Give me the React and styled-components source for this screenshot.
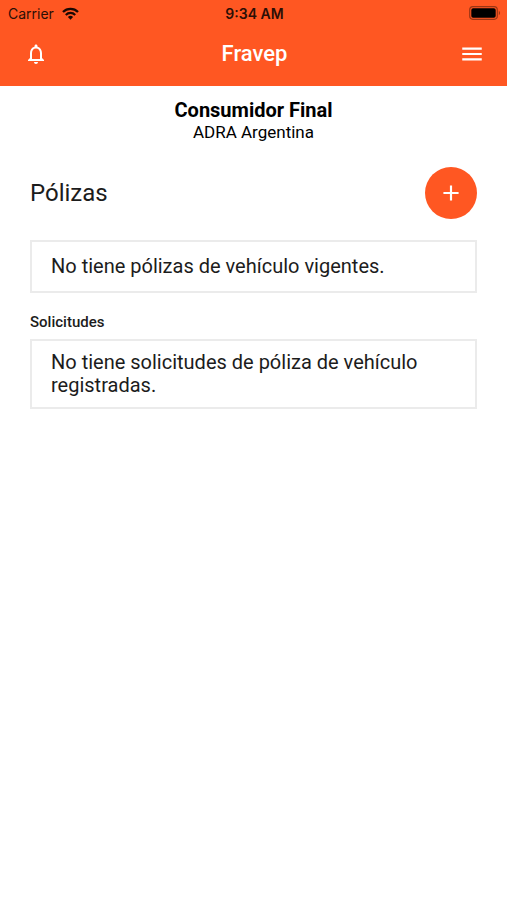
import React from "react";
import styled, { createGlobalStyle } from "styled-components";
import { MdAdd, MdMenu, MdNotificationsNone } from "react-icons/md";

const GlobalStyle = createGlobalStyle`
  * {
    box-sizing: border-box;
  }

  body {
    margin: 0;
    background: #fff;
    color: #1c1c1c;
    font-family: Roboto, sans-serif;
  }
`;

const TopBar = styled.header`
  background-color: #ff5722;
`;

const StatusBar = styled.div`
  display: grid;
  grid-template-columns: 1fr auto 1fr;
  align-items: center;
  height: 26px;
  padding: 0 6px 0 8px;
  color: #2b0f06;
  font-family: Inter, sans-serif;
  font-size: 14px;
`;

const Carrier = styled.div`
  display: flex;
  align-items: center;
  gap: 8px;
`;

const Clock = styled.time`
  font-weight: 600;
`;

const Battery = styled.svg`
  justify-self: end;
`;

const NavBar = styled.nav`
  display: grid;
  grid-template-columns: 1fr auto 1fr;
  align-items: center;
  height: 60px;
  padding: 0 22px 4px 24px;
  color: #fff;
`;

const Title = styled.h1`
  margin: 0;
  font-size: 22px;
  font-weight: 500;
  line-height: 28px;
`;

const IconButton = styled.button`
  display: flex;
  justify-self: ${props => props.$side};
  padding: 0;
  border: 0;
  background: none;
  color: inherit;
  cursor: pointer;
`;

const Client = styled.section`
  padding-top: 13px;
  color: #000;
  text-align: center;
`;

const ClientName = styled.h2`
  margin: 0;
  font-size: 20px;
  font-weight: 700;
  line-height: 22px;
`;

const ClientCompany = styled.p`
  margin: 0;
  font-size: 17px;
  line-height: 22px;
`;

const Content = styled.main`
  padding: 24px 30px;
`;

const SectionHeader = styled.div`
  display: flex;
  align-items: center;
  justify-content: space-between;
  margin-bottom: 21px;
`;

const SectionTitle = styled.h2`
  margin: 0;
  font-size: 24px;
  font-weight: 400;
  line-height: 28px;
`;

const AddButton = styled.button`
  display: flex;
  align-items: center;
  justify-content: center;
  width: 52px;
  height: 52px;
  padding: 0;
  border: 0;
  border-radius: 50%;
  background-color: #ff5722;
  color: #fff;
  cursor: pointer;
`;

const Subtitle = styled.h3`
  margin: 19px 0 7px;
  font-size: 15px;
  font-weight: 500;
  line-height: 20px;
`;

const Message = styled.p`
  margin: 0;
  padding: ${props => (props.$tall ? 13 : 10)}px 19px;
  border: 2px solid #ebebeb;
  font-size: 20px;
  line-height: 23px;
`;

const WifiIcon = () => (
  <svg width="17" height="13" viewBox="0 0 17 13" fill="none" stroke="#1a0803">
    <path d="M1 5a10.6 10.6 0 0 1 15 0" strokeWidth="2.3" />
    <path d="M3.8 7.9a6.6 6.6 0 0 1 9.4 0" strokeWidth="2.2" />
    <path d="M8.5 12.7 5.9 10.1a3.7 3.7 0 0 1 5.2 0z" fill="#1a0803" stroke="none" />
  </svg>
);

const BatteryIcon = () => (
  <Battery width="32" height="14" viewBox="0 0 32 14">
    <rect x="0.7" y="0.7" width="27.6" height="12.6" rx="3.2" fill="none" stroke="#9b3514" strokeWidth="1.2" />
    <rect x="2.3" y="2.3" width="24.4" height="9.4" rx="1.8" fill="#000" />
    <path d="M29.8 4.8c1.7.7 1.7 3.7 0 4.4z" fill="#9b3514" />
  </Battery>
);

export default () => (
  <>
    <GlobalStyle />
    <TopBar>
      <StatusBar>
        <Carrier>
          Carrier
          <WifiIcon />
        </Carrier>
        <Clock>9:34 AM</Clock>
        <BatteryIcon />
      </StatusBar>
      <NavBar>
        <IconButton $side="start" aria-label="Notificaciones">
          <MdNotificationsNone size={24} />
        </IconButton>
        <Title>Fravep</Title>
        <IconButton $side="end" aria-label="Menú">
          <MdMenu size={26} />
        </IconButton>
      </NavBar>
    </TopBar>
    <Client>
      <ClientName>Consumidor Final</ClientName>
      <ClientCompany>ADRA Argentina</ClientCompany>
    </Client>
    <Content>
      <SectionHeader>
        <SectionTitle>Pólizas</SectionTitle>
        <AddButton aria-label="Agregar póliza">
          <MdAdd size={26} />
        </AddButton>
      </SectionHeader>
      <Message $tall>No tiene pólizas de vehículo vigentes.</Message>
      <Subtitle>Solicitudes</Subtitle>
      <Message>No tiene solicitudes de póliza de vehículo registradas.</Message>
    </Content>
  </>
);
